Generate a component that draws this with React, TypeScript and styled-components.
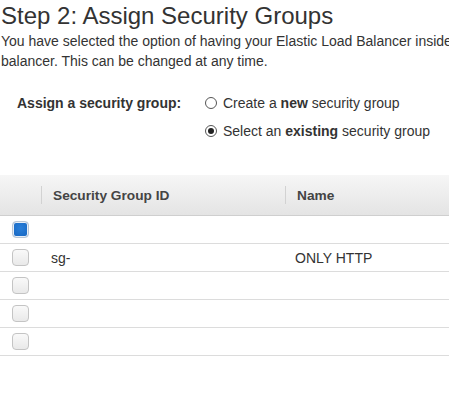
import React from "react";
import styled, { createGlobalStyle } from "styled-components";

const Global = createGlobalStyle`
  html, body { margin: 0; padding: 0; background: #fff; overflow: hidden; }
  body { font-family: Arial, "Liberation Sans", sans-serif; color: #333; }
`;

const Page = styled.div`
  width: 449px;
  height: 403px;
  overflow: hidden;
  padding: 0 0 0 1px;
  box-sizing: border-box;
`;

const Title = styled.h1`
  margin: 0;
  padding-top: 2px;
  font-size: 24px;
  font-weight: normal;
  line-height: 28px;
  color: #333;
  white-space: nowrap;
`;

const Intro = styled.p`
  margin: 1px 0 0;
  font-size: 14px;
  line-height: 20px;
  color: #333;
`;

const Line = styled.span`
  display: block;
  white-space: nowrap;
`;

const AssignRow = styled.div`
  display: grid;
  grid-template-columns: 187px auto;
  margin-top: 18px;
  padding-left: 16px;
`;

const Label = styled.div`
  font-weight: bold;
  font-size: 14px;
  line-height: 28px;
  color: #333;
`;

const Options = styled.div`
  display: flex;
  flex-direction: column;
`;

const Option = styled.label`
  display: flex;
  align-items: center;
  gap: 6px;
  height: 28px;
  font-size: 14px;
  color: #333;
  b { font-weight: bold; }
`;

const Radio = styled.span<{ $checked?: boolean }>`
  width: 12px;
  height: 12px;
  border: 1px solid #555;
  border-radius: 50%;
  box-sizing: border-box;
  display: flex;
  align-items: center;
  justify-content: center;
  margin-left: 1px;
  &::after {
    content: "";
    width: 6px;
    height: 6px;
    border-radius: 50%;
    background: ${(p) => (p.$checked ? "#222" : "transparent")};
  }
`;

const Table = styled.div`
  margin-top: 30px;
  margin-left: -1px;
  width: 449px;
`;

const Header = styled.div`
  display: grid;
  grid-template-columns: 41px 244px 1fr;
  height: 40px;
  align-items: center;
  background: linear-gradient(#f6f6f6, #e4e4e4);
  border-bottom: 1px solid #cfcfcf;
`;

const HeadCell = styled.div<{ $divider?: boolean }>`
  height: 18px;
  display: flex;
  align-items: center;
  padding-left: 11px;
  border-left: ${(p) => (p.$divider ? "1px solid #d2d2d2" : "none")};
  font-weight: bold;
  font-size: 13.7px;
  color: #444;
`;

const Row = styled.div`
  display: grid;
  grid-template-columns: 41px 244px 1fr;
  height: 27px;
  align-items: center;
  border-bottom: 1px solid #dcdcdc;
`;

const Cell = styled.div`
  font-size: 14px;
  color: #333;
  padding-left: 10px;
`;

const CheckCell = styled.div`
  display: flex;
  align-items: center;
  padding-left: 12px;
`;

const Check = styled.span<{ $checked?: boolean }>`
  width: 17px;
  height: 17px;
  box-sizing: border-box;
  border-radius: 4px;
  border: 1px solid ${(p) => (p.$checked ? "#b9c6d6" : "#c4c4c4")};
  background: ${(p) =>
    p.$checked
      ? "radial-gradient(circle at 50% 40%, #2a7fd9, #1565c0) padding-box"
      : "linear-gradient(#f9f9f9, #e9e9e9)"};
  box-shadow: ${(p) => (p.$checked ? "inset 0 0 0 1px #e8eef6" : "none")};
`;

const rows = [
  { checked: true, id: "", name: "" },
  { checked: false, id: "sg-", name: "ONLY HTTP" },
  { checked: false, id: "", name: "" },
  { checked: false, id: "", name: "" },
  { checked: false, id: "", name: "" },
];

export default function App() {
  return (
    <Page>
      <Global />
      <Title>Step 2: Assign Security Groups</Title>
      <Intro>
        <Line>
          You have selected the option of having your Elastic Load Balancer inside of a VPC, which allows you to
        </Line>
        <Line>balancer. This can be changed at any time.</Line>
      </Intro>
      <AssignRow>
        <Label>Assign a security group:</Label>
        <Options>
          <Option>
            <Radio />
            <span>
              Create a <b>new</b> security group
            </span>
          </Option>
          <Option>
            <Radio $checked />
            <span>
              Select an <b>existing</b> security group
            </span>
          </Option>
        </Options>
      </AssignRow>
      <Table>
        <Header>
          <div />
          <HeadCell $divider>Security Group ID</HeadCell>
          <HeadCell $divider>Name</HeadCell>
        </Header>
        {rows.map((r, i) => (
          <Row key={i}>
            <CheckCell>
              <Check $checked={r.checked} />
            </CheckCell>
            <Cell>{r.id}</Cell>
            <Cell>{r.name}</Cell>
          </Row>
        ))}
      </Table>
    </Page>
  );
}
